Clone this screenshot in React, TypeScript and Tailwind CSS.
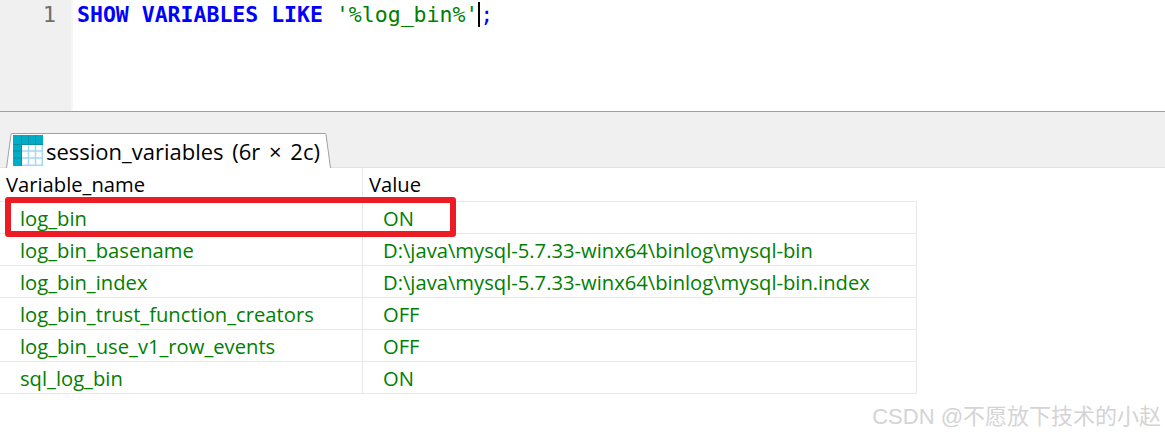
import React from 'react'

const rows = [
	['log_bin', 'ON'],
	['log_bin_basename', 'D:\\java\\mysql-5.7.33-winx64\\binlog\\mysql-bin'],
	['log_bin_index', 'D:\\java\\mysql-5.7.33-winx64\\binlog\\mysql-bin.index'],
	['log_bin_trust_function_creators', 'OFF'],
	['log_bin_use_v1_row_events', 'OFF'],
	['sql_log_bin', 'ON'],
]

const GridIcon = () => (
	<svg width="30" height="31" viewBox="0 0 30 31" className="relative shrink-0">
		<rect x="0" y="0" width="30" height="31" fill="#a6d8f5" />
		<rect x="8" y="10" width="20.500" height="19.500" fill="#ffffff" />
		<path d="M15.500 10V30M22.500 10V30M8 16H30M8 23H30" stroke="#a6d8f5" strokeWidth="1.500" />
		<rect x="0" y="0" width="30" height="10" fill="#00adc6" />
		<rect x="0" y="0" width="8.500" height="31" fill="#00adc6" />
		<path d="M8.500 0V31M15.500 0V10M22.500 0V10M0 9.500H30M0 16H8.500M0 23H8.500" stroke="#0a8ea3" strokeWidth="1" />
	</svg>
)

export default function App() {
	return (
		<div className="relative h-[437px] w-[1165px] overflow-hidden bg-white font-['Open_Sans','Noto_Sans',sans-serif]">
			{/* Editor */}
			<div className="flex h-[111px]">
				<div className="h-full w-[73px] border-r-2 border-[#f6f6f6] bg-[#f0f0f0] pr-[15px] pt-[1px] text-right font-['DejaVu_Sans_Mono',monospace] text-[22px] leading-[28px] text-[#6e6e6e]">
					1
				</div>
				<div className="ml-[4px] whitespace-pre pt-[1px] font-['DejaVu_Sans_Mono',monospace] text-[21.5px] leading-[28px]">
					<span className="font-bold text-[#0000ff]">SHOW VARIABLES LIKE</span>{' '}
					<span className="border-r-2 border-black text-[#008000]">'%log_bin%'</span>
					<span className="text-[#0000ff]">;</span>
				</div>
			</div>

			{/* Tab bar */}
			<div className="flex h-[57px] items-end border-t border-b border-t-[#a0a0a0] border-b-[#e3e3e3] bg-[#f0f0f0] pl-[6px]">
				<div className="relative -mb-px flex h-[35px] w-[325px] items-center gap-[3px] pl-[7px] text-[22px] text-black">
					<svg width="325" height="35" viewBox="0 0 325 35" className="absolute left-0 top-0">
						<path d="M0.500 35L5 1.500Q5 0.500 6 0.500H319Q320 0.500 320 1.500L324.500 35" fill="#ffffff" stroke="#a0a0a0" strokeWidth="1" />
					</svg>
					<GridIcon />
					<span className="relative whitespace-pre pt-[2px] [word-spacing:3px]">session_variables (6r × 2c)</span>
				</div>
			</div>

			{/* Results */}
			<div className="w-[917px] text-[20.2px]">
				<div className="flex h-[34px] items-center border-b border-[#e8e8e8] text-black">
					<div className="flex h-full w-[363px] items-center border-r border-[#e8e8e8] pl-[6px]">Variable_name</div>
					<div className="pl-[6px]">Value</div>
				</div>
				{rows.map(([name, value]) => (
					<div key={name} className="flex h-[32px] items-center border-b border-r border-[#e8e8e8] text-[#008000]">
						<div className="flex h-full w-[363px] items-center border-r border-[#e8e8e8] pl-[20px] pt-[1px]">{name}</div>
						<div className="pl-[20px] pt-[1px]">{value}</div>
					</div>
				))}
			</div>

			{/* Highlight drawn over the first row */}
			<div className="absolute left-[5px] top-[197px] h-[40px] w-[451px] rounded-[3px] border-[6px] border-[#ed1c24]" />

			{/* Watermark */}
			<div className="absolute right-[4px] top-[403px] font-['Liberation_Sans','Noto_Sans_CJK_SC',sans-serif] text-[22px] leading-[28px] text-[#d4d4d4]">
				CSDN @不愿放下技术的小赵
			</div>
		</div>
	)
}
